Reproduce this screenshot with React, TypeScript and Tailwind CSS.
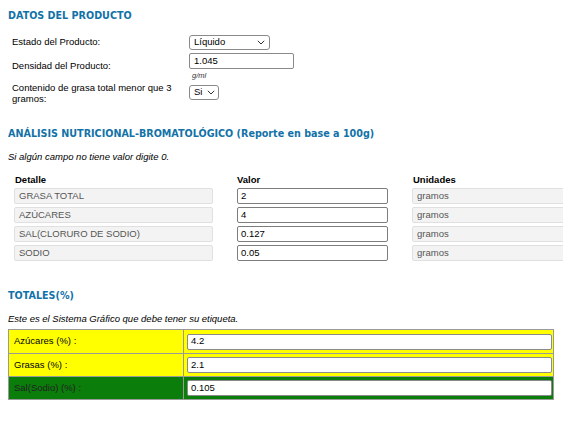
import React from "react";

const Chevron = () => (
  <svg width="8" height="5" viewBox="0 0 8 5" className="shrink-0">
    <polyline points="0.8,0.8 4,4 7.2,0.8" fill="none" stroke="#333" strokeWidth="1" />
  </svg>
);

const Heading = ({ children, className = "" }: { children: React.ReactNode; className?: string }) => (
  <h2 className={`font-['DejaVu_Sans',sans-serif] font-bold text-[9.6px] leading-[12px] text-[#1272a8] ${className}`}>
    {children}
  </h2>
);

const nutri = [
  { d: "GRASA TOTAL", v: "2" },
  { d: "AZÚCARES", v: "4" },
  { d: "SAL(CLORURO DE SODIO)", v: "0.127" },
  { d: "SODIO", v: "0.05" },
];

const totals = [
  { l: "Azúcares (%) :", v: "4.2", bg: "bg-[#ffff00]" },
  { l: "Grasas (%) :", v: "2.1", bg: "bg-[#ffff00]" },
  { l: "Sal(Sodio) (%) :", v: "0.105", bg: "bg-[#0b7d0b]" },
];

export default function App() {
  return (
    <div className="w-[563px] h-[421px] overflow-hidden bg-white pl-2 pt-[10px] font-['Liberation_Sans',Arial,sans-serif] text-[9.5px] text-black">
      <Heading>DATOS DEL PRODUCTO</Heading>

      <div className="mt-[11px]">
        <div className="flex items-center h-[19px]">
          <div className="w-[181px] shrink-0 pl-1">Estado del Producto:</div>
          <div className="w-[81px] h-[15px] border border-[#8a8a8a] rounded-[3px] bg-white flex items-center justify-between pl-[4px] pr-[4px]">
            <span>Líquido</span>
            <Chevron />
          </div>
        </div>
        <div className="flex items-center h-[29px]">
          <div className="w-[181px] shrink-0 pl-1">Densidad del Producto:</div>
          <div className="flex flex-col self-start pt-[1px]">
            <div className="w-[105px] h-[16px] border border-[#8a8a8a] rounded-[2px] bg-white flex items-center pl-[4px]">1.045</div>
            <div className="italic text-[7.5px] leading-[9px] pl-[3px] mt-[2px] text-[#333]">g/ml</div>
          </div>
        </div>
        <div className="flex items-center h-[23px]">
          <div className="w-[181px] shrink-0 pl-1 leading-[11px]">
            Contenido de grasa total menor que 3
            <br />
            gramos:
          </div>
          <div className="w-[30px] h-[15px] border border-[#8a8a8a] rounded-[3px] bg-white flex items-center justify-between pl-[4px] pr-[3px]">
            <span>Si</span>
            <Chevron />
          </div>
        </div>
      </div>

      <Heading className="mt-[24px]">ANÁLISIS NUTRICIONAL-BROMATOLÓGICO (Reporte en base a 100g)</Heading>
      <p className="italic leading-[12px] mt-[11px]">Si algún campo no tiene valor digite 0.</p>

      <div className="mt-[11px] pl-[6px]">
        <div className="flex gap-[24px] h-[14px] font-bold leading-[12px]">
          <div className="w-[199px] shrink-0 pl-[1px]">Detalle</div>
          <div className="w-[151px] shrink-0">Valor</div>
          <div className="w-[160px] shrink-0 pl-[1px]">Unidades</div>
        </div>
        {nutri.map((r) => (
          <div key={r.d} className="flex gap-[24px] h-[19px]">
            <div className="w-[199px] h-[16px] shrink-0 border border-[#e0e0e0] rounded-[2px] bg-[#f3f3f3] text-[#555] flex items-center pl-[4px]">
              {r.d}
            </div>
            <div className="w-[151px] h-[16px] shrink-0 border border-[#7d7d7d] rounded-[2px] bg-white flex items-center pl-[3px]">
              {r.v}
            </div>
            <div className="w-[160px] h-[16px] shrink-0 border border-[#e0e0e0] rounded-[2px] bg-[#f3f3f3] text-[#555] flex items-center pl-[4px]">
              gramos
            </div>
          </div>
        ))}
      </div>

      <Heading className="mt-[26px]">TOTALES(%)</Heading>
      <p className="italic leading-[12px] mt-[11px]">Este es el Sistema Gráfico que debe tener su etiqueta.</p>

      <div className="mt-[4px] w-[546px] border border-[#9a9a9a]">
        {totals.map((r, i) => (
          <div
            key={r.l}
            className={`flex h-[23px] ${r.bg} ${i > 0 ? "border-t border-[#9a9a9a]" : ""}`}
          >
            <div className={`w-[175px] border-r border-[#9a9a9a] flex items-center pl-[5px] ${i === 2 ? "text-[#222]" : ""}`}>
              {r.l}
            </div>
            <div className="flex-1 flex items-center pl-[3px] pr-[1px]">
              <div className="w-full h-[16px] border border-[#8a8a8a] rounded-[2px] bg-white flex items-center pl-[3px]">
                {r.v}
              </div>
            </div>
          </div>
        ))}
      </div>
    </div>
  );
}
